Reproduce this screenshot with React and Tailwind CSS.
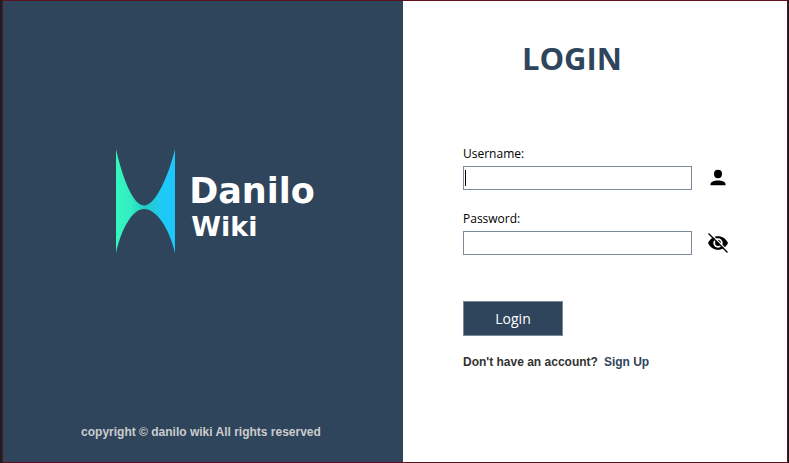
import React from "react";

function Logo() {
  return (
    <div className="flex items-center gap-3">
      <svg width="62" height="106" viewBox="0 0 62 106" aria-hidden="true">
        <defs>
          <linearGradient id="wing" x1="0" y1="0" x2="1" y2="0">
            <stop offset="0" stopColor="#36f7bd" />
            <stop offset="0.25" stopColor="#30edc2" />
            <stop offset="0.5" stopColor="#20cdc4" />
            <stop offset="0.78" stopColor="#1fc9f4" />
            <stop offset="1" stopColor="#1cc6ff" />
          </linearGradient>
        </defs>
        <path
          d="M1 1C6 24 17 57.5 29 57.5C41 57.5 54 26 60 1V105C54 79 41 61 29 61C17 61 6 82 1 105Z"
          fill="url(#wing)"
        />
      </svg>
      <div className="flex flex-col pt-3 font-['DejaVu_Sans',sans-serif] font-bold text-white">
        <span className="text-[35px] leading-10">Danilo</span>
        <span className="pl-0.5 text-[27px] leading-8">Wiki</span>
      </div>
    </div>
  );
}

function UserIcon() {
  return (
    <svg width="20" height="20" viewBox="0 0 20 20" aria-hidden="true">
      <ellipse cx="10" cy="6" rx="4" ry="4.2" fill="#000" />
      <path d="M2.500 17.200V16C2.500 13.700 6.200 12.400 10 12.400S17.500 13.700 17.500 16V17.200Z" fill="#000" />
    </svg>
  );
}

function EyeOffIcon() {
  return (
    <svg width="20" height="20" viewBox="0 0 20 20" aria-hidden="true">
      <path d="M0 10C2 5.700 5.600 3.200 10 3.200S18 5.700 20 10C18 14.300 14.400 16.800 10 16.800S2 14.300 0 10Z" fill="#000" />
      <circle cx="10" cy="10" r="4.700" fill="#fff" />
      <circle cx="10" cy="10" r="2.900" fill="#000" />
      <path d="M1.700 -0.200L20.700 18.800" stroke="#fff" strokeWidth="1.300" />
      <path d="M0.500 0.500L19.500 19.500" stroke="#000" strokeWidth="1.300" />
    </svg>
  );
}

const inputClass =
  "h-6 w-[229px] border border-[#7a8a99] bg-white px-1 text-[13px] text-black outline-none";

export default function App() {
  return (
    <div className="flex min-h-screen border-r border-l-2 border-r-[#16181a] border-l-[#1d2023] bg-white">
      <div className="flex grow border border-[#5e1220]">
        <aside className="flex w-[400px] shrink-0 flex-col items-center bg-[#2f455c] pb-5">
          <div className="flex grow items-center pb-[22px] pl-6">
            <Logo />
          </div>
          <p className="pr-1 font-['Liberation_Sans',sans-serif] text-xs leading-5 font-bold text-[#cccccc]">
            copyright © danilo wiki All rights reserved
          </p>
        </aside>
        <main className="grow pt-[35px] pl-[60px] font-['Open_Sans',sans-serif]">
          <h1 className="w-[218px] text-center text-[31px] leading-11 font-bold text-[#2f455c]">LOGIN</h1>
          <form className="pt-16" onSubmit={(e) => e.preventDefault()}>
            <label htmlFor="username" className="mb-0.5 block text-xs leading-5 text-black">
              Username:
            </label>
            <div className="flex items-center gap-4">
              <div className="grid">
                <input id="username" type="text" className={`${inputClass} col-start-1 row-start-1`} />
                <span className="col-start-1 row-start-1 ml-0.5 h-4 w-px self-center bg-black" />
              </div>
              <UserIcon />
            </div>
            <label htmlFor="password" className="mt-[19px] mb-0.5 block text-xs leading-5 text-black">
              Password:
            </label>
            <div className="flex items-center gap-4">
              <input id="password" type="password" className={inputClass} />
              <button type="button" aria-label="Show password">
                <EyeOffIcon />
              </button>
            </div>
            <button
              type="submit"
              className="mt-[46px] block h-[35px] w-[100px] border border-[#7a8a99] bg-[#2f455c] text-sm text-white"
            >
              Login
            </button>
          </form>
          <p className="flex gap-1.5 pt-4 font-['Liberation_Sans',sans-serif] text-xs leading-5 font-bold text-[#333333]">
            Don't have an account?
            <a href="#signup" className="text-[#2f455c]">
              Sign Up
            </a>
          </p>
        </main>
      </div>
    </div>
  );
}
